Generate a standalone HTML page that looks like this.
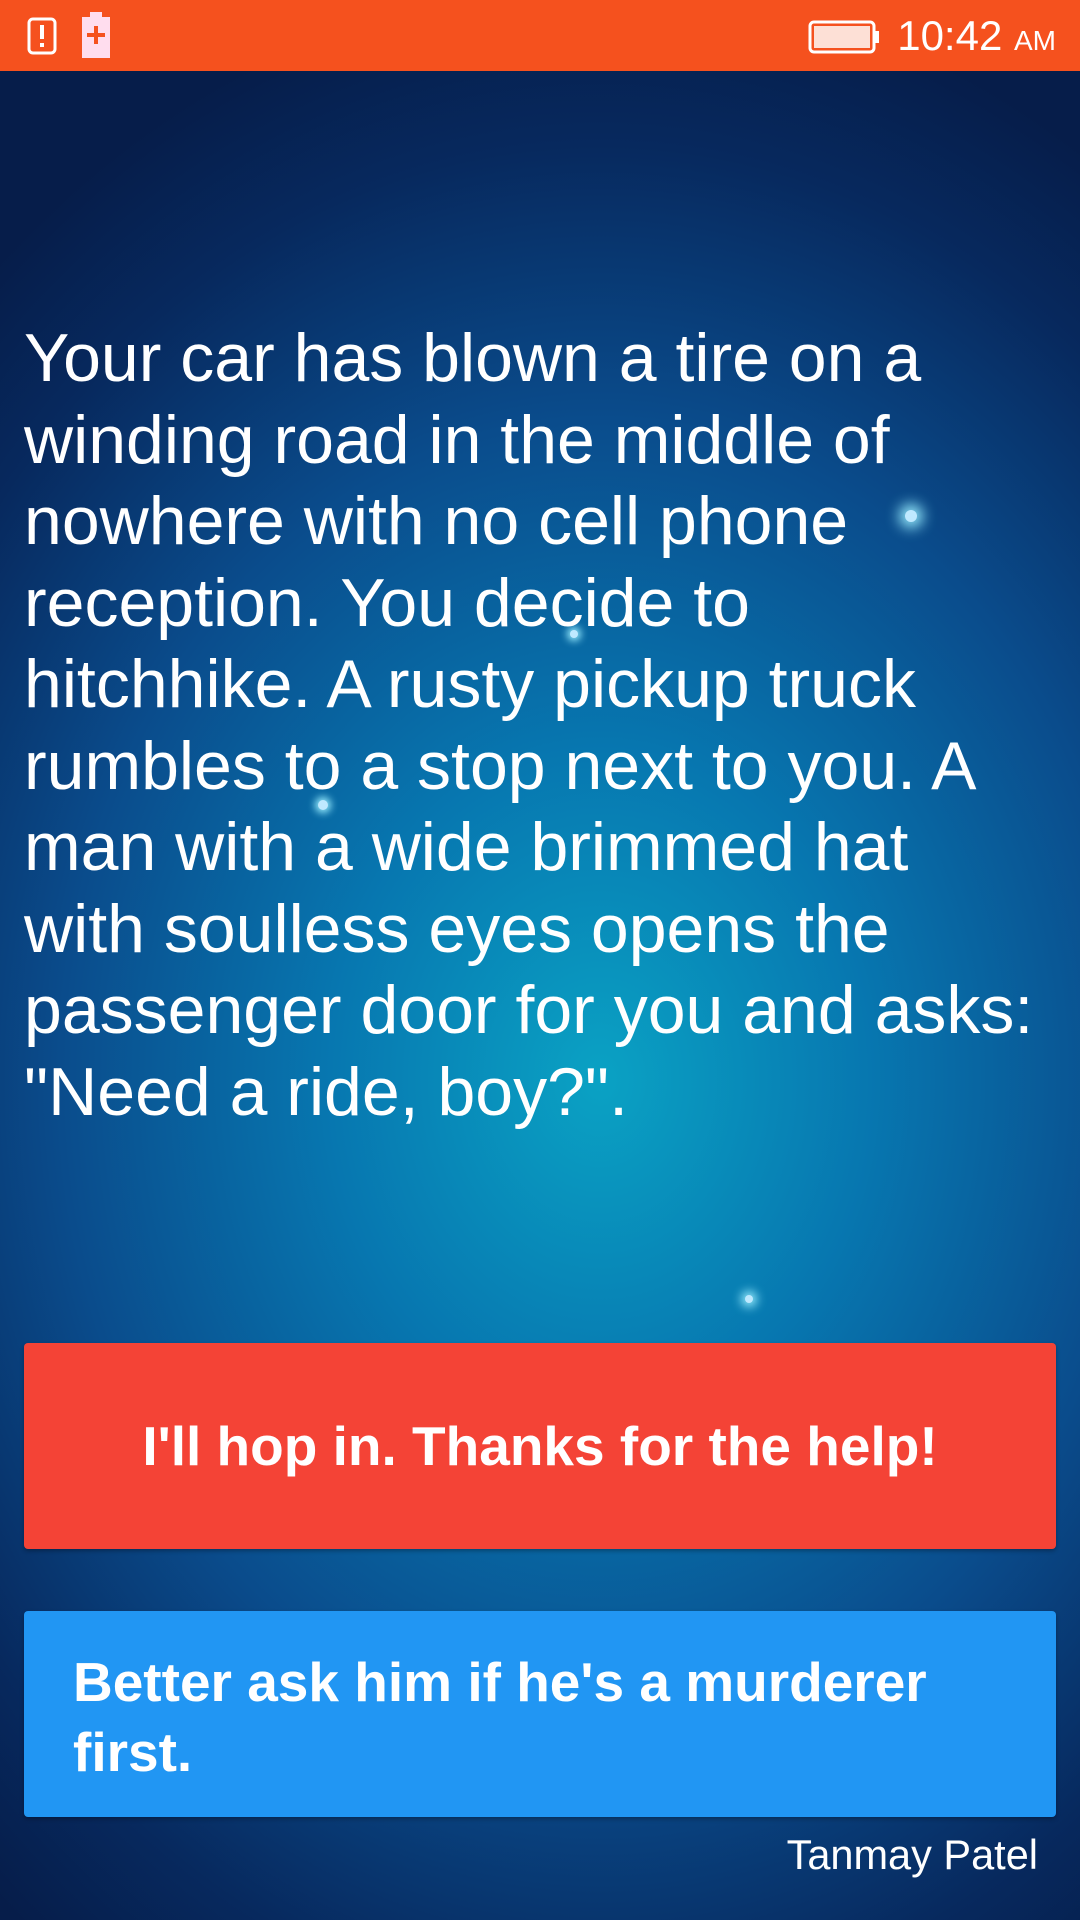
<!DOCTYPE html>
<html><head><meta charset="utf-8"><style>
html,body{margin:0;padding:0;width:1080px;height:1920px;overflow:hidden;font-family:"Liberation Sans",sans-serif}
body{background:radial-gradient(ellipse 900px 1100px at 600px 1080px,#0aa2c4 0%,#0777b0 30%,#0a4c8c 60%,#07295e 85%,#061d4a 100%);position:relative}
.sb{position:absolute;left:0;top:0;width:1080px;height:71px;background:#f5511e}
.time{position:absolute;right:24px;top:12px;color:#fff;font-size:42px}
.time small{font-size:28px}
.txt{position:absolute;left:24px;top:318px;width:1050px;color:#fff;font-size:68px;line-height:81.5px;white-space:nowrap}
.btn{position:absolute;left:24px;width:1032px;border-radius:4px;color:#fff;font-weight:bold;font-size:55px;box-shadow:0 2px 4px rgba(0,0,0,.3)}
.r{top:1343px;height:206px;background:#f44336;text-align:center;line-height:206px}
.b{top:1611px;height:206px;background:#2196f3;box-sizing:border-box;padding:36px 49px 0;line-height:70px}
.au{position:absolute;right:42px;top:1831px;color:#fff;font-size:41.5px}
.star{position:absolute;border-radius:50%;background:#bfe9ff}
</style></head><body>
<div class="sb">
<svg style="position:absolute;left:26px;top:16px" width="32" height="40" viewBox="0 0 32 40"><rect x="3" y="3" width="26" height="34" rx="4" fill="none" stroke="#fff" stroke-width="3"/><rect x="14" y="9" width="4" height="14" fill="#fff"/><rect x="14" y="27" width="4" height="4" fill="#fff"/></svg>
<svg style="position:absolute;left:80px;top:12px" width="32" height="46" viewBox="0 0 32 46"><rect x="10" y="0" width="12" height="5" fill="#fde"/><rect x="2" y="5" width="28" height="41" fill="#fde"/><rect x="14" y="14" width="4" height="18" fill="#f5511e"/><rect x="7" y="21" width="18" height="4" fill="#f5511e"/></svg>
<svg style="position:absolute;left:808px;top:20px" width="72" height="34" viewBox="0 0 72 34"><rect x="2" y="2" width="64" height="30" rx="4" fill="none" stroke="#fff" stroke-width="3"/><rect x="6" y="6" width="56" height="22" fill="#fde0d6"/><rect x="67" y="11" width="4" height="12" fill="#fff"/></svg>
<div class="time">10:42 <small>AM</small></div>
</div>
<div class="star" style="left:905px;top:510px;width:12px;height:12px;box-shadow:0 0 14px 6px #9ef"></div>
<div class="star" style="left:745px;top:1295px;width:8px;height:8px;box-shadow:0 0 10px 4px #9ef"></div>
<div class="star" style="left:570px;top:630px;width:8px;height:8px;box-shadow:0 0 8px 3px #9ef"></div>
<div class="star" style="left:318px;top:800px;width:10px;height:10px;box-shadow:0 0 8px 3px #9ef"></div>
<div class="txt">Your car has blown a tire on a<br>winding road in the middle of<br>nowhere with no cell phone<br>reception. You decide to<br>hitchhike. A rusty pickup truck<br>rumbles to a stop next to you. A<br>man with a wide brimmed hat<br>with soulless eyes opens the<br>passenger door for you and asks:<br>"Need a ride, boy?".</div>
<div class="btn r">I'll hop in. Thanks for the help!</div>
<div class="btn b">Better ask him if he's a murderer<br>first.</div>
<div class="au">Tanmay Patel</div>
</body></html>
